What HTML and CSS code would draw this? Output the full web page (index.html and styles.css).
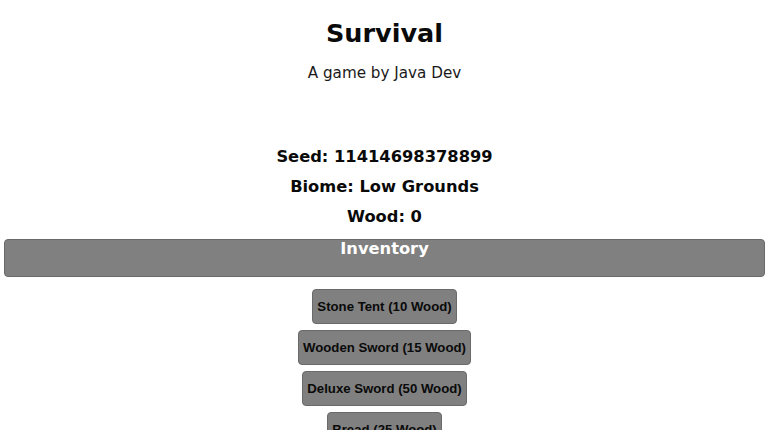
FILE: index.html
```html
<!DOCTYPE html>
<html>
<head>
<meta charset="utf-8">
<title>Survival</title>
<link rel="stylesheet" href="styles.css">
</head>
<body>
<header class="header">
  <h1 class="title">Survival</h1>
  <p class="subtitle">A game by Java Dev</p>
</header>
<section class="stats">
  <div class="stat">Seed: 11414698378899</div>
  <div class="stat">Biome: Low Grounds</div>
  <div class="stat">Wood: 0</div>
</section>
<div class="inventory">Inventory</div>
<section class="shop">
  <button class="shop-btn">Stone Tent (10 Wood)</button>
  <button class="shop-btn">Wooden Sword (15 Wood)</button>
  <button class="shop-btn">Deluxe Sword (50 Wood)</button>
  <button class="shop-btn">Bread (25 Wood)</button>
</section>
</body>
</html>
```
FILE: styles.css
```css
html, body {
  margin: 0;
  padding: 0;
  background: #ffffff;
}
body {
  padding: 0 4px;
  font-family: "DejaVu Sans", Verdana, sans-serif;
  color: #0a0a0a;
  text-align: center;
}
.header {
  display: flex;
  flex-direction: column;
  align-items: center;
}
.title {
  margin: 18px 0 0;
  font-size: 25.5px;
  line-height: 30px;
  font-weight: bold;
}
.subtitle {
  margin: 15px 0 0;
  font-size: 15.2px;
  line-height: 20px;
  color: #1a1a1a;
}
.stats {
  margin-top: 59px;
  display: flex;
  flex-direction: column;
}
.stat {
  font-size: 16.3px;
  line-height: 30px;
  font-weight: bold;
}
.inventory {
  margin-top: 7px;
  height: 36px;
  background: #808080;
  border: 1px solid #6a6a6a;
  border-radius: 4px;
  color: #ffffff;
  font-size: 16.3px;
  font-weight: bold;
  line-height: 18px;
  box-sizing: content-box;
}
.shop {
  margin-top: 12px;
  display: flex;
  flex-direction: column;
  align-items: center;
  gap: 6px;
}
.shop-btn {
  height: 35px;
  padding: 0 4px;
  background: #808080;
  border: 1px solid #6a6a6a;
  border-radius: 4px;
  color: #0a0a0a;
  font-family: "Liberation Sans", Arial, sans-serif;
  font-size: 13.2px;
  font-weight: bold;
}
```
